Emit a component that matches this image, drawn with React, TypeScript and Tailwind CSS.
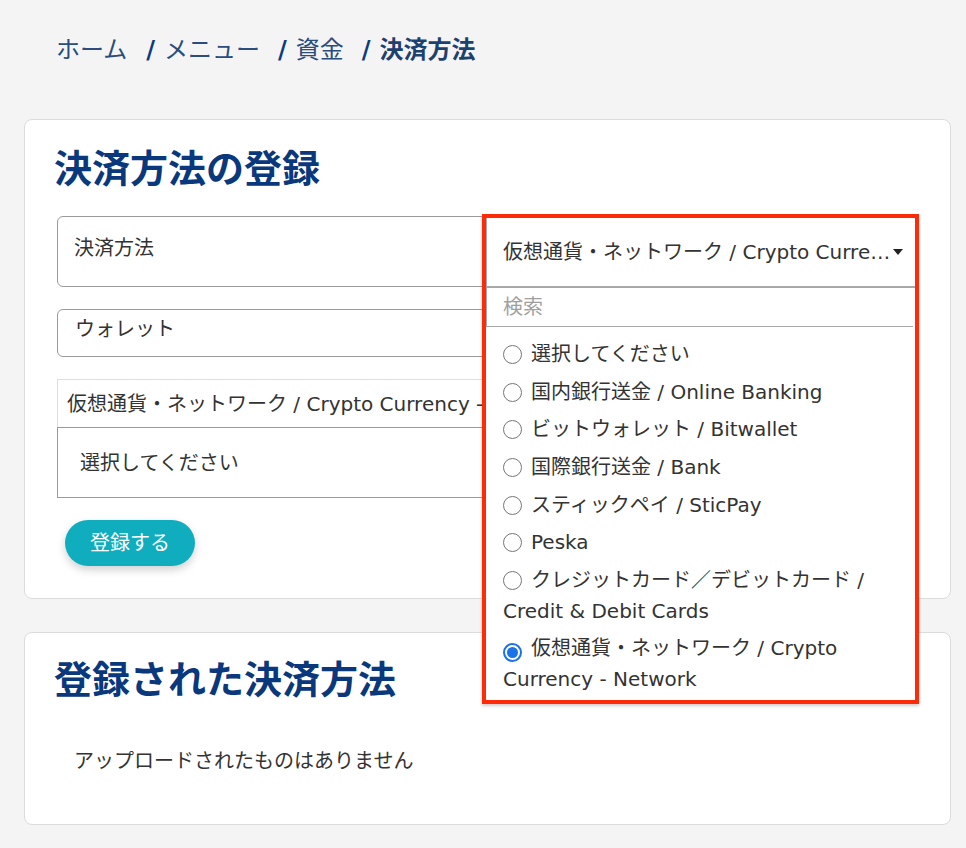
import React from "react";

const font = {
  fontFamily: '"DejaVu Sans", "Noto Sans CJK JP", sans-serif',
};

const options = [
  "選択してください",
  "国内銀行送金 / Online Banking",
  "ビットウォレット / Bitwallet",
  "国際銀行送金 / Bank",
  "スティックペイ / SticPay",
  "Peska",
  "クレジットカード／デビットカード / Credit & Debit Cards",
  "仮想通貨・ネットワーク / Crypto Currency - Network",
];

function Radio({ checked }: { checked: boolean }) {
  if (checked) {
    return (
      <span className="mr-[9px] inline-flex h-[19px] w-[19px] translate-y-[3px] items-center justify-center rounded-full border-[2px] border-[#1a73e8] bg-white align-baseline">
        <span className="h-[11px] w-[11px] rounded-full bg-[#1a73e8]" />
      </span>
    );
  }
  return (
    <span className="mr-[9px] inline-block h-[19px] w-[19px] translate-y-[3px] rounded-full border-[1.5px] border-[#767676] bg-white align-baseline" />
  );
}

export default function App() {
  const selected = options.length - 1;

  return (
    <div
      style={font}
      className="min-h-screen bg-[#f4f4f4] pb-[24px] pl-[24px] pr-[15px] pt-[33px] text-[#333]"
    >
      {/* breadcrumb */}
      <nav className="flex items-center pl-[32px] text-[24px] leading-[34px] text-[#2a4d7d]">
        <span>ホーム</span>
        <span className="ml-[19px] mr-[9px] font-bold text-[#0d3b80]">/</span>
        <span>メニュー</span>
        <span className="ml-[18px] mr-[9px] font-bold text-[#0d3b80]">/</span>
        <span>資金</span>
        <span className="ml-[18px] mr-[9px] font-bold text-[#0d3b80]">/</span>
        <span className="font-bold text-[#1d416f]">決済方法</span>
      </nav>

      {/* register card */}
      <section className="relative mt-[52px] rounded-[8px] border border-[#dcdcdc] bg-white px-[32px] pb-[32px] pt-[26px]">
        <h1 className="-ml-[3px] text-[38px] font-bold leading-[46px] text-[#0a387c]">
          決済方法の登録
        </h1>

        <div className="mt-[24px] h-[71px] rounded-[6px] border border-[#9a9a9a] px-[16px] pt-[16px] text-[20px] leading-[30px]">
          決済方法
        </div>

        <div className="mt-[22px] h-[48px] rounded-[6px] border border-[#9a9a9a] px-[17px] pt-[4px] text-[20px] leading-[30px]">
          ウォレット
        </div>

        <div className="mt-[22px]">
          <div className="flex h-[48px] items-center overflow-hidden whitespace-nowrap border border-b-0 border-[#dedede] px-[9px] text-[20px]">
            仮想通貨・ネットワーク / Crypto Currency - Network
          </div>
          <div className="flex h-[71px] items-center border border-[#9a9a9a] px-[22px] text-[20px]">
            選択してください
          </div>
        </div>

        <button className="ml-[8px] mt-[22px] h-[46px] w-[130px] rounded-full bg-[#10adbf] text-[20px] text-white shadow-[0_4px_8px_rgba(0,0,0,0.18)]">
          登録する
        </button>

        {/* open dropdown, highlighted */}
        <div className="absolute left-[457px] top-[94px] z-10 w-[437px] border-[4px] border-[#ff2a07] bg-white shadow-[0_2px_3px_rgba(0,0,0,0.2)]">
          <div className="flex h-[70px] items-center border-b-[2px] border-l border-[#a8a8a8] pl-[16px] pr-[12px] text-[20px]">
            <span className="min-w-0 flex-1 truncate">
              仮想通貨・ネットワーク / Crypto Currency - Network
            </span>
            <span className="h-0 w-0 border-x-[5px] border-t-[6px] border-x-transparent border-t-[#222]" />
          </div>
          <div className="mr-[2px] flex h-[39px] items-center border-b border-l border-[#a8a8a8] px-[16px] text-[20px] text-[#a0a0a0]">
            検索
          </div>
          <ul className="px-[17px] pb-[1px] pt-[9px] text-[20px] leading-[31px]">
            {options.map((o, i) => (
              <li key={o} className="py-[3.3px]">
                <Radio checked={i === selected} />
                {o}
              </li>
            ))}
          </ul>
        </div>
      </section>

      {/* registered card */}
      <section className="mt-[33px] h-[193px] rounded-[8px] border border-[#dcdcdc] bg-white px-[32px] pt-[24px]">
        <h2 className="-ml-[3px] text-[38px] font-bold leading-[46px] text-[#0a387c]">
          登録された決済方法
        </h2>
        <p className="mt-[43px] pl-[17px] text-[20px] leading-[30px]">
          アップロードされたものはありません
        </p>
      </section>
    </div>
  );
}
